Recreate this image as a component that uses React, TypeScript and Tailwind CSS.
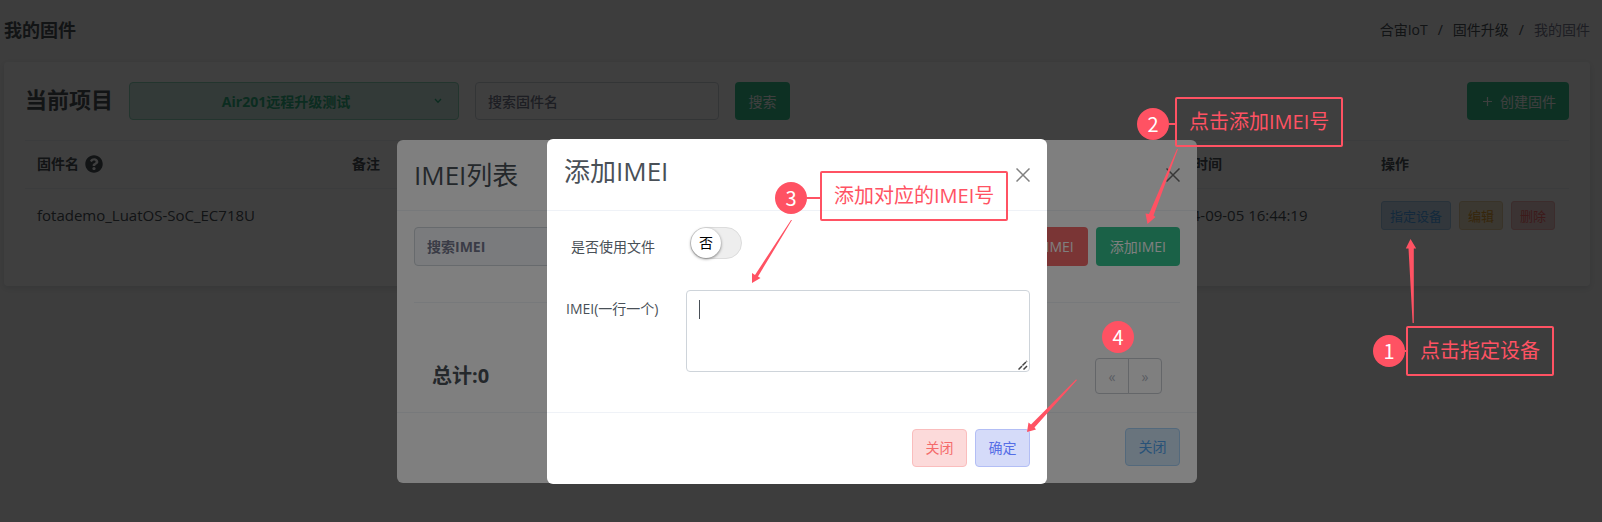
import { FaQuestionCircle } from "react-icons/fa";

const font = "font-['Open_Sans','Noto_Sans_CJK_SC',sans-serif]";

const softButton =
  "flex h-[38px] w-[55px] items-center justify-center rounded-[4px] border text-[14px] leading-[22px]";

const rowButton = "h-[29px] rounded-[3px] border px-2 whitespace-nowrap";

function CloseIcon() {
  return (
    <svg viewBox="0 0 14 14" className="size-[14px]" fill="none" stroke="currentColor" strokeWidth="1.5">
      <path d="M0.5 0.5L13.5 13.5M13.5 0.5L0.5 13.5" />
    </svg>
  );
}

function Step({ n }: { n: number }) {
  return (
    <span className="flex size-8 items-center justify-center rounded-full bg-[#ff5263] font-['Noto_Sans_CJK_SC',sans-serif] text-[20px] leading-none text-white">
      {n}
    </span>
  );
}

function Note({ n, text, lead, line }: { n: number; text: string; lead: string; line: string }) {
  return (
    <div className="flex items-center">
      <span className={lead}>
        <Step n={n} />
        <span className={line} />
      </span>
      <p className="flex h-[50px] items-center whitespace-nowrap rounded-[2px] border-2 border-[#ff5263] px-3 text-[20px] leading-[26px] text-[#ff5263]">
        {text}
      </p>
    </div>
  );
}

function FirmwarePage() {
  return (
    <div className="pr-3 pl-1">
      <header className="flex h-[62px] items-center justify-between pb-[2px]">
        <h4 className="text-[18px] leading-6 font-bold">我的固件</h4>
        <nav aria-label="breadcrumb">
          <ol className="flex gap-[10px] text-[14px] leading-[22px]">
            <li><a href="#">合宙IoT</a></li>
            <li>/</li>
            <li><a href="#">固件升级</a></li>
            <li>/</li>
            <li className="text-[#74788d]">我的固件</li>
          </ol>
        </nav>
      </header>
      <section className="h-[224px] rounded-[4px] bg-white px-[21px] pt-5 shadow-[0_2px_6px_rgba(18,38,63,0.12)]">
        <div className="flex h-[38px] items-center">
          <h2 className="mr-4 pb-1 text-[22px] leading-7 font-bold">当前项目</h2>
          <button type="button" className="mr-4 flex h-[38px] w-[330px] items-center rounded-[4px] border border-[#8cd4b9] bg-[#ccebe0] pr-4 pl-2 text-[14px] font-bold text-[#2fb080]">
            <span className="flex-1 text-center">Air201远程升级测试</span>
            <svg viewBox="0 0 8 6" className="h-[6px] w-2" fill="none" stroke="currentColor" strokeWidth="1.3">
              <path d="M1 1l3 3.2L7 1" />
            </svg>
          </button>
          <input
            aria-label="搜索固件名"
            placeholder="搜索固件名"
            className="mr-4 h-[38px] w-[244px] rounded-[4px] border border-[#ced4da] px-3 text-[14px] placeholder:font-medium placeholder:text-[#74788d]"
          />
          <button type="button" className="h-[38px] w-[55px] rounded-[4px] bg-[#34c38f] text-[14px] text-white">搜索</button>
          <button type="button" className="ml-auto flex h-[38px] items-center gap-2 rounded-[4px] bg-[#34c38f] pr-[13px] pl-4 text-[14px] text-white">
            <svg viewBox="0 0 9 9" className="size-[9px]" stroke="currentColor" strokeWidth="1.2">
              <path d="M4.5 0V9M0 4.5H9" />
            </svg>
            <span>创建固件</span>
          </button>
        </div>
        <table className="mt-5 w-full table-fixed text-left text-[14px] leading-[22px]">
          <colgroup>
            <col className="w-[315px]" />
            <col className="w-[814px]" />
            <col />
            <col className="w-[200px]" />
          </colgroup>
          <thead>
            <tr className="h-12 border-y border-[#eff2f7]">
              <th className="px-3 pb-[2px]">
                <span className="flex items-center gap-[6px]">
                  固件名 <FaQuestionCircle className="size-[18px]" />
                </span>
              </th>
              <th className="px-3 pb-[2px]">备注</th>
              <th className="px-3 pb-[2px]">上传时间</th>
              <th className="px-3 pb-[2px]">操作</th>
            </tr>
          </thead>
          <tbody>
            <tr className="h-[54px] text-[15px]">
              <td className="px-3 pb-[2px]">fotademo_LuatOS-SoC_EC718U</td>
              <td />
              <td className="px-3 pb-[2px] whitespace-nowrap">2024-09-05 16:44:19</td>
              <td className="pl-3">
                <div className="flex gap-2 text-[13px] leading-5">
                  <button type="button" className={`${rowButton} border-[#a3c8ea] bg-[#c8dff3] text-[#50a5f1]`}>指定设备</button>
                  <button type="button" className={`${rowButton} border-[#e6cfa3] bg-[#eee0c4] text-[#d9992c]`}>编辑</button>
                  <button type="button" className={`${rowButton} border-[#f0b0b0] bg-[#eccccc] text-[#f46a6a]`}>删除</button>
                </div>
              </td>
            </tr>
          </tbody>
        </table>
      </section>
    </div>
  );
}

function ImeiListDialog() {
  return (
    <div role="dialog" aria-label="IMEI列表" className="w-[800px] rounded-[6px] bg-white">
      <div className="flex h-[71px] items-center justify-between border-b border-[#eff2f7] px-[17px]">
        <h5 className="text-[26px] leading-8">IMEI列表</h5>
        <button type="button" aria-label="关闭" className="text-[#707070]"><CloseIcon /></button>
      </div>
      <div className="h-[201px] px-[17px] pt-4">
        <div className="flex gap-2 border-b border-[#eff2f7] pb-9">
          <input
            aria-label="搜索IMEI"
            placeholder="搜索IMEI"
            className="mr-auto h-[39px] w-[400px] rounded-[4px] border border-[#ced4da] bg-[#f4f6fa] px-3 text-[14px] placeholder:font-bold placeholder:text-[#74788d]"
          />
          <button type="button" className="h-[39px] rounded-[4px] bg-[#f46a6a] px-[14px] text-[14px] text-white">删除IMEI</button>
          <button type="button" className="h-[39px] rounded-[4px] bg-[#34c38f] px-[14px] text-[14px] text-white">添加IMEI</button>
        </div>
        <div className="flex items-center justify-between px-[18px] pt-[55px]">
          <p className="text-[20px] leading-9 font-bold">总计:0</p>
          <div className="flex text-[14px] text-[#b5bac6]">
            <button type="button" aria-label="上一页" className="h-9 w-[34px] rounded-l-[4px] border border-[#c8ccd2]">«</button>
            <button type="button" aria-label="下一页" className="-ml-px h-9 w-[34px] rounded-r-[4px] border border-[#c8ccd2]">»</button>
          </div>
        </div>
      </div>
      <div className="flex h-[71px] items-center justify-end border-t border-[#eff2f7] px-[17px] pb-[2px]">
        <button type="button" className={`${softButton} border-[#a7d2f8] bg-[#d3e8fb] text-[#50a5f1]`}>关闭</button>
      </div>
    </div>
  );
}

function AddImeiDialog() {
  return (
    <div role="dialog" aria-label="添加IMEI" className="w-[500px] rounded-[6px] bg-white">
      <div className="flex h-[72px] items-center justify-between border-b border-[#eff2f7] px-[17px]">
        <h5 className="pb-2 text-[26px] leading-8">添加IMEI</h5>
        <button type="button" aria-label="关闭" className="text-[#808080]"><CloseIcon /></button>
      </div>
      <div className="flex h-[201px] flex-col gap-[31px] px-[17px] pt-4 text-[14px] leading-[22px]">
        <div className="flex h-8 items-center">
          <span id="use-file" className="w-[126px] pt-2 pl-[7px]">是否使用文件</span>
          <button type="button" role="switch" aria-checked="false" aria-labelledby="use-file" className="h-8 w-[52px] rounded-full border border-[#dcdcdc] bg-[#eeeeee]">
            <span className="flex size-[30px] items-center justify-center rounded-full bg-white text-black shadow-[0_1px_3px_rgba(0,0,0,0.5)]">否</span>
          </button>
        </div>
        <div className="flex items-start">
          <label htmlFor="imei" className="w-[122px] pt-2 pl-[2px]">IMEI(一行一个)</label>
          <div className="relative flex flex-1">
            <textarea id="imei" className="h-[82px] flex-1 resize-none rounded-[4px] border border-[#ced4da] px-3 py-2 outline-none" />
            <span className="absolute top-[10px] left-[13px] h-[19px] w-px bg-[#495057]" />
            <svg viewBox="0 0 10 10" className="absolute right-[2px] bottom-[2px] size-[10px]" stroke="#444" strokeWidth="1.5">
              <path d="M0.5 9.5L9 1M5.5 9.5L9 6" strokeDasharray="5 0.6" />
            </svg>
          </div>
        </div>
      </div>
      <div className="flex h-[72px] items-center justify-end gap-2 border-t border-[#eff2f7] px-[17px] pb-[2px]">
        <button type="button" className={`${softButton} border-[#fabdbd] bg-[#fcdada] text-[#f46a6a]`}>关闭</button>
        <button type="button" className={`${softButton} border-[#b3bef5] bg-[#d5dbf9] text-[#556ee6]`}>确定</button>
      </div>
    </div>
  );
}

export default function App() {
  return (
    <div className={`relative min-h-screen overflow-hidden bg-[#f5f5f5] text-[#495057] ${font}`}>
      <FirmwarePage />
      <div className="absolute inset-0 flex items-start justify-center bg-black/50 pt-[140px] pr-2">
        <ImeiListDialog />
      </div>
      <div className="absolute inset-0 flex items-start justify-center bg-black/50 pt-[139px] pr-2">
        <AddImeiDialog />
      </div>
      <div className="absolute top-[326px] left-[1373px]">
        <Note n={1} text="点击指定设备" lead="flex items-center" line="h-[2px] w-px bg-[#ff5263]" />
      </div>
      <div className="absolute top-[97px] left-[1137px]">
        <Note n={2} text="点击添加IMEI号" lead="flex items-center pt-1" line="h-[2px] w-[6px] bg-[#ff5263]" />
      </div>
      <div className="absolute top-[171px] left-[775px]">
        <Note n={3} text="添加对应的IMEI号" lead="flex items-center pt-1" line="h-[2px] w-[13px] bg-[#ff5263]" />
      </div>
      <div className="absolute top-[321px] left-[1102px]"><Step n={4} /></div>
      <svg viewBox="0 0 1602 522" className="pointer-events-none absolute top-0 left-0 h-[522px] w-[1602px]" fill="#ff5263">
        <path d="M1413.8 323L1412.6 323L1408.5 248.5L1405.8 248.5L1410.5 239L1416.2 248.5L1413.8 248.5Z" />
        <path d="M1178 149L1177 149L1149 214L1145.5 213.5L1147.5 224L1155.5 217L1153.5 215.5Z" />
        <path d="M792 220L791 220L755 275L752 273L752 283L760.5 278L758 276.5Z" />
        <path d="M1077 380L1076 379.5L1031 424.5L1028.5 422.5L1027 432L1036 429.5L1034.5 427.5Z" />
      </svg>
    </div>
  );
}
